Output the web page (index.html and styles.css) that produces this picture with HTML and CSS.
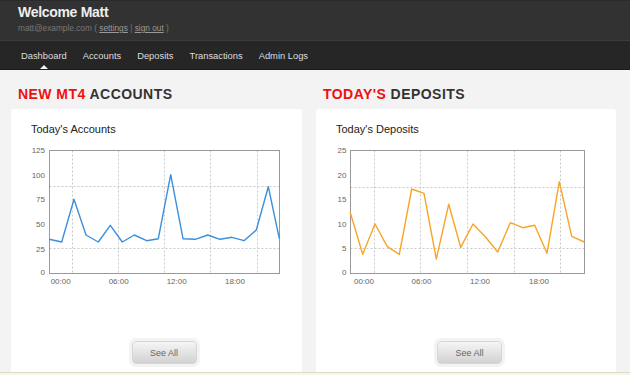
FILE: index.html
```html
<!DOCTYPE html>
<html lang="en">
<head>
    <meta charset="UTF-8">
    <meta name="viewport" content="width=device-width, initial-scale=1.0">
    <title>Dashboard</title>
    <link rel="stylesheet" href="styles.css">
</head>
<body>
<header class="topbar">
    <div class="welcome">Welcome Matt</div>
    <div class="account">matt@example.com ( <a href="#">settings</a> | <a href="#">sign out</a> )</div>
</header>
<nav class="menu">
    <a href="#" class="active">Dashboard</a>
    <a href="#">Accounts</a>
    <a href="#">Deposits</a>
    <a href="#">Transactions</a>
    <a href="#">Admin Logs</a>
</nav>

<main class="content">
    <section class="panel">
        <h2 class="heading"><span class="hot">NEW MT4</span> ACCOUNTS</h2>
        <div class="card">
            <div class="card-title">Today's Accounts</div>
            <svg class="chart" viewBox="0 0 270 150" width="270" height="150">
                <g class="grid">
                    <line x1="52.5" y1="10.5" x2="52.5" y2="133.5"/>
                    <line x1="98.5" y1="10.5" x2="98.5" y2="133.5"/>
                    <line x1="144.5" y1="10.5" x2="144.5" y2="133.5"/>
                    <line x1="190.5" y1="10.5" x2="190.5" y2="133.5"/>
                    <line x1="237.5" y1="10.5" x2="237.5" y2="133.5"/>
                    <line x1="29.5" y1="46.5" x2="259.5" y2="46.5"/>
                    <line x1="29.5" y1="108.5" x2="259.5" y2="108.5"/>
                </g>
                <rect class="frame" x="29.5" y="10.5" width="230" height="123"/>
                <polyline class="line blue" points="29.3,99.3 41.7,102 54,59.3 66,95 78.3,102 90.3,85.3 102.3,102 114.3,95 126.7,100.7 138.3,98.7 150.7,34.7 163,98.7 175.3,99.3 187.7,95 200,99.3 212,97.3 224,100.7 236.3,90 248.3,46.7 259.3,98.7"/>
                <g class="ylabels">
                    <text x="25" y="11">125</text>
                    <text x="25" y="35.5">100</text>
                    <text x="25" y="60">75</text>
                    <text x="25" y="85">50</text>
                    <text x="25" y="110">25</text>
                    <text x="25" y="133">0</text>
                </g>
                <g class="xlabels">
                    <text x="40.7" y="142">00:00</text>
                    <text x="98.7" y="142">06:00</text>
                    <text x="156.7" y="142">12:00</text>
                    <text x="215" y="142">18:00</text>
                </g>
            </svg>
            <div class="card-foot foot-a">
                <button class="btn">See All</button>
            </div>
        </div>
    </section>

    <section class="panel">
        <h2 class="heading"><span class="hot">TODAY'S</span> DEPOSITS</h2>
        <div class="card">
            <div class="card-title">Today's Deposits</div>
            <svg class="chart" viewBox="0 0 270 150" width="270" height="150">
                <g class="grid">
                    <line x1="49.5" y1="10.5" x2="49.5" y2="133.5"/>
                    <line x1="95.5" y1="10.5" x2="95.5" y2="133.5"/>
                    <line x1="142.5" y1="10.5" x2="142.5" y2="133.5"/>
                    <line x1="189.5" y1="10.5" x2="189.5" y2="133.5"/>
                    <line x1="235.5" y1="10.5" x2="235.5" y2="133.5"/>
                    <line x1="25.5" y1="47.5" x2="259.5" y2="47.5"/>
                    <line x1="25.5" y1="108.5" x2="259.5" y2="108.5"/>
                </g>
                <rect class="frame" x="25.5" y="10.5" width="234" height="123"/>
                <polyline class="line orange" points="25,71.7 37.7,114.3 50,84 62.3,106.7 74.3,114.3 86.7,49 99,53.3 111.3,119 123.7,64.3 135.7,107.3 148,84 160.7,97.3 172.7,112 185.3,82.7 197.7,87.7 209.7,85.3 222,113.3 234.3,41.7 246.7,96.3 259.3,102"/>
                <g class="ylabels">
                    <text x="21.5" y="11">25</text>
                    <text x="21.5" y="35.5">20</text>
                    <text x="21.5" y="60">15</text>
                    <text x="21.5" y="84.5">10</text>
                    <text x="21.5" y="108.5">5</text>
                    <text x="21.5" y="133">0</text>
                </g>
                <g class="xlabels">
                    <text x="39" y="142">00:00</text>
                    <text x="96.5" y="142">06:00</text>
                    <text x="155" y="142">12:00</text>
                    <text x="214" y="142">18:00</text>
                </g>
            </svg>
            <div class="card-foot foot-b">
                <button class="btn">See All</button>
            </div>
        </div>
    </section>
</main>
<footer class="bottom"></footer>
</body>
</html>
```

FILE: styles.css
```css
body {
    margin: 0;
    font-family: "Liberation Sans", Arial, sans-serif;
    background-color: #f3f3f3;
}
a {
    text-decoration: none;
}
.topbar {
    height: 36px;
    padding: 3px 18px 0;
    background-color: #323232;
    border-top: 1px solid #2a2a2a;
    border-bottom: 1px solid #3c3c3c;
}
.welcome {
    font-size: 14px;
    line-height: 16px;
    font-weight: bold;
    letter-spacing: -0.3px;
    color: #eeeeee;
}
.account {
    margin-top: 2px;
    font-size: 8.3px;
    line-height: 12px;
    color: #777777;
}
.account a {
    color: #999999;
    text-decoration: underline;
}
.menu {
    display: flex;
    align-items: center;
    gap: 16px;
    height: 28px;
    padding: 1px 0 0 21px;
    box-sizing: border-box;
    height: 29px;
    background-color: #262626;
    border-bottom: 1px solid #1c1c1c;
}
.menu a {
    position: relative;
    font-size: 9.35px;
    color: #dddddd;
}
.menu a.active:after {
    content: '';
    position: absolute;
    left: 50%;
    top: 14px;
    margin-left: -4px;
    border-left: 4px solid transparent;
    border-right: 4px solid transparent;
    border-bottom: 4px solid #f3f3f3;
}
.content {
    display: grid;
    grid-template-columns: 291px 300px;
    column-gap: 14px;
    padding: 16px 0 0 11px;
}
.heading {
    margin: 0 0 7px 7px;
    font-size: 14px;
    line-height: 16px;
    letter-spacing: 0.45px;
    color: #333333;
}
.hot {
    color: #f01010;
}
.card {
    display: flex;
    flex-direction: column;
    box-sizing: border-box;
    height: 263px;
    padding: 14px 0 0 9px;
    background-color: #ffffff;
    border-radius: 3px 3px 0 0;
}
.card-title {
    margin-left: 11px;
    font-size: 11px;
    line-height: 13px;
    color: #222222;
}
.chart {
    display: block;
    margin-top: 4px;
}
.chart .grid line {
    stroke: #c8c8c8;
    stroke-width: 1;
    stroke-dasharray: 2 2;
}
.chart .frame {
    fill: none;
    stroke: #999999;
    stroke-width: 1;
}
.chart .line {
    fill: none;
    stroke-width: 1.4;
    stroke-linejoin: round;
}
.chart .blue {
    stroke: #3b8fdc;
}
.chart .orange {
    stroke: #f8a428;
}
.chart text {
    font-family: "Liberation Sans", Arial, sans-serif;
    font-size: 8px;
    fill: #666666;
    dominant-baseline: middle;
}
.ylabels text {
    text-anchor: end;
}
.xlabels text {
    text-anchor: middle;
}
.card-foot {
    display: flex;
    justify-content: center;
    margin-top: auto;
    padding-bottom: 8px;
}
.foot-a {
    padding-left: 6px;
}
.foot-b {
    padding-right: 2px;
}
.btn {
    width: 65px;
    height: 23px;
    padding: 0;
    font-family: "Liberation Sans", Arial, sans-serif;
    font-size: 9px;
    color: #666666;
    background: linear-gradient(#f5f5f5, #d2d2d2);
    border: 1px solid #d6d6d6;
    border-radius: 4px;
    box-shadow: 0 0 0 3px #f3f3f3;
}
.bottom {
    height: 3px;
    background-color: #f7f6ee;
    border-top: 1px solid #dedac6;
}
```
